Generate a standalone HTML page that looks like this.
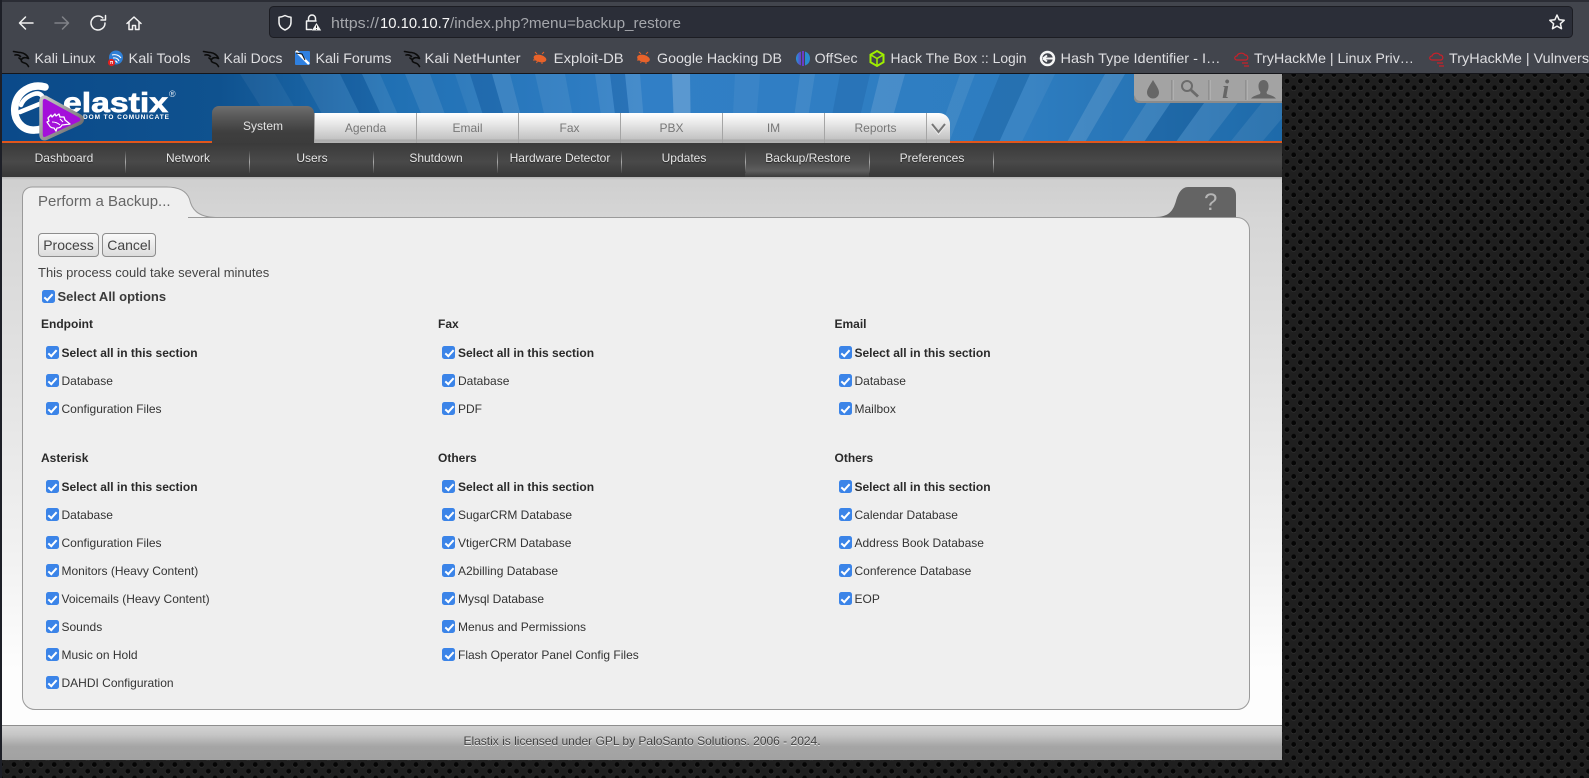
<!DOCTYPE html>
<html><head><meta charset="utf-8"><title>Elastix</title>
<style>
html,body{margin:0;padding:0;width:1589px;height:778px;overflow:hidden;background:#1c1c1c;font-family:"Liberation Sans",sans-serif}
#bg{position:absolute;left:0;top:0}
.a{position:absolute}
#strip{left:0;top:0;width:2px;height:778px;background:#1d1f27}
.m{position:absolute;top:143px;height:30px;line-height:30px;width:124px;text-align:center;font-size:12px;color:#e6e6e6;text-shadow:0 1px 1px #222}
.sep{position:absolute;top:151px;width:1px;height:22px;background:linear-gradient(#444,#aaa 50%,#444)}
.t{position:absolute;top:113px;height:30px;width:101px;border-left:1px solid #a5a5a5;background:linear-gradient(#fff,#e8e8e8 35%,#c2c2c2 88%,#aaa 89%,#b4b4b4);text-align:center;font-size:12px;line-height:30px;color:#777}
.r{position:absolute;height:16px;line-height:16px;font-size:12px;color:#333;white-space:nowrap;padding-left:16px}
.r:before{content:"";position:absolute;left:0;top:1px;width:13px;height:13px;border-radius:2.5px;background:#3b84e8}
.r:after{content:"";position:absolute;left:4.5px;top:2.5px;width:3px;height:7px;border:solid #fff;border-width:0 2px 2px 0;transform:rotate(42deg)}
.b{font-weight:bold;color:#2a2a2a}
.h{position:absolute;height:16px;line-height:16px;font-size:12px;font-weight:bold;color:#2a2a2a}
.btn{position:absolute;top:233px;height:22px;line-height:22px;border:1px solid #8d8d8d;border-radius:4px;background:linear-gradient(#fafafa,#dcdcdc);font-size:14px;color:#444;text-align:center}
</style></head><body>
<svg id="bg" width="1589" height="778">
<defs>
<pattern id="p" width="13.4" height="13.4" patternUnits="userSpaceOnUse" x="1283.65" y="77.95">
<rect width="13.4" height="13.4" fill="#1f1f1f"/>
<circle cx="3.35" cy="3.5" r="2.7" fill="#3c3c3c"/><circle cx="3.35" cy="3.2" r="2.5" fill="#050505"/>
<circle cx="10.05" cy="10.2" r="2.7" fill="#3c3c3c"/><circle cx="10.05" cy="9.9" r="2.5" fill="#050505"/>
</pattern>
<linearGradient id="hb" x1="0" x2="1" y1="0" y2="0">
<stop offset="0" stop-color="#0b4a8a"/><stop offset=".17" stop-color="#0f528f"/><stop offset=".3" stop-color="#2070b3"/><stop offset=".5" stop-color="#317fc6"/><stop offset=".8" stop-color="#2e7dc0"/><stop offset="1" stop-color="#1e6aa9"/>
</linearGradient>
<linearGradient id="of" x1="0" x2="1"><stop offset="0" stop-color="#1f9ad8"/><stop offset="1" stop-color="#6a3cc8"/></linearGradient>
<linearGradient id="bev" x1="0" x2="1" y1="0" y2="1"><stop offset="0" stop-color="#c8c8c8"/><stop offset=".6" stop-color="#8e8e8e"/><stop offset="1" stop-color="#555"/></linearGradient>
<clipPath id="hc"><rect x="2" y="74" width="1280" height="69"/></clipPath>
</defs>
<rect width="1589" height="778" fill="url(#p)"/>
<rect x="2" y="74" width="1280" height="69" fill="url(#hb)"/>
<g clip-path="url(#hc)" fill="#fff">
<polygon points="240,74 275,74 700,800" opacity=".05"/>
<polygon points="300,74 340,74 700,800" opacity=".07"/>
<polygon points="362,74 380,74 700,800" opacity=".08"/>
<polygon points="405,74 430,74 700,800" opacity=".09"/>
<polygon points="455,74 470,74 700,800" opacity=".06"/>
<polygon points="492,74 510,74 700,800" opacity=".1"/>
<polygon points="535,74 565,74 700,800" opacity=".07"/>
<polygon points="595,74 610,74 700,800" opacity=".08"/>
<polygon points="625,74 640,74 700,800" opacity=".1"/>
<polygon points="672,74 690,74 700,800" opacity=".2"/>
<polygon points="735,74 760,74 700,800" opacity=".05"/>
<polygon points="800,74 815,74 700,800" opacity=".08"/>
<polygon points="880,74 905,74 700,800" opacity=".12"/>
<polygon points="960,74 975,74 700,800" opacity=".08"/>
<polygon points="1030,74 1055,74 700,800" opacity=".06"/>
<polygon points="1105,74 1125,74 700,800" opacity=".12"/>
<polygon points="1165,74 1190,74 700,800" opacity=".1"/>
<polygon points="1225,74 1260,74 700,800" opacity=".1"/>
<polygon points="1285,74 1320,74 700,800" opacity=".08"/>
</g>
<g clip-path="url(#hc)" fill="#0a3f78">
<polygon points="340,74 362,74 700,800" opacity=".18"/>
<polygon points="470,74 492,74 700,800" opacity=".18"/>
<polygon points="610,74 625,74 700,800" opacity=".18"/>
<polygon points="840,74 870,74 700,800" opacity=".15"/>
<polygon points="1000,74 1030,74 700,800" opacity=".2"/>
<polygon points="1190,74 1225,74 700,800" opacity=".2"/>
</g>
<!-- Browser chrome -->
<rect x="0" y="0" width="1589" height="74" fill="#42454d"/>
<rect x="0" y="0" width="1589" height="2" fill="#2b2d35"/>
<rect x="0" y="73" width="1589" height="1" fill="#15161b"/>
<rect x="269.5" y="6.5" width="1303" height="31" rx="4" fill="#2b2e38" stroke="#1c1d23"/>
<g fill="none" stroke="#f2f2f2" stroke-width="1.5" stroke-linecap="round" stroke-linejoin="round">
<path d="M33 23H19.5M25.500 17l-6 6 6 6"/>
<path d="M55 23H68.500M62.500 17l6 6-6 6" stroke="#808288"/>
<path d="M105 23a7 7 0 1 1-2.200-5.100M105.500 15.500v4.500H101"/>
<path d="M127 23.500l7-6.500 7 6.500M129 22v7.500h3.500v-4h3v4h3.500V22"/>
<path d="M285 15.500c2 1 4 1.600 6 1.800v5c0 4-3 6.500-6 7.700-3-1.200-6-3.700-6-7.700v-5c2-.2 4-.8 6-1.800z"/>
<path d="M308.500 21v-2.500a3.500 3.500 0 0 1 7 0v2.500M306.500 21h9.500M306.500 21v8.500h5"/>
<path d="M1557 15l2.100 4.700 5.100.6-3.800 3.400 1.100 5-4.500-2.600-4.500 2.600 1.100-5-3.800-3.400 5.100-.6z"/>
</g>
<path d="M316.500 23l4.700 7.500h-9.400z" fill="#f2f2f2"/><path d="M316.500 25.500v2.500M316.500 29v.8" stroke="#222" stroke-width="1"/>
<g font-family="'Liberation Sans',sans-serif" font-size="15">
<text x="331" y="28" fill="#a5a7ac" textLength="48" lengthAdjust="spacingAndGlyphs">https://</text>
<text x="380" y="28" fill="#f5f5f5" textLength="70" lengthAdjust="spacingAndGlyphs">10.10.10.7</text>
<text x="450" y="28" fill="#a5a7ac" textLength="231" lengthAdjust="spacingAndGlyphs">/index.php?menu=backup_restore</text>
</g>
<g font-family="'Liberation Sans',sans-serif" font-size="14" fill="#dfdfe2">
<text x="34.500" y="63" textLength="61" lengthAdjust="spacingAndGlyphs">Kali Linux</text>
<text x="128.500" y="63" textLength="62" lengthAdjust="spacingAndGlyphs">Kali Tools</text>
<text x="223.500" y="63" textLength="59" lengthAdjust="spacingAndGlyphs">Kali Docs</text>
<text x="315.500" y="63" textLength="76" lengthAdjust="spacingAndGlyphs">Kali Forums</text>
<text x="424.500" y="63" textLength="96" lengthAdjust="spacingAndGlyphs">Kali NetHunter</text>
<text x="553.700" y="63" textLength="70" lengthAdjust="spacingAndGlyphs">Exploit-DB</text>
<text x="657" y="63" textLength="125" lengthAdjust="spacingAndGlyphs">Google Hacking DB</text>
<text x="814.600" y="63" textLength="43" lengthAdjust="spacingAndGlyphs">OffSec</text>
<text x="890.500" y="63" textLength="136" lengthAdjust="spacingAndGlyphs">Hack The Box :: Login</text>
<text x="1060.500" y="63" textLength="160" lengthAdjust="spacingAndGlyphs">Hash Type Identifier - I…</text>
<text x="1254" y="63" textLength="160" lengthAdjust="spacingAndGlyphs">TryHackMe | Linux Priv…</text>
<text x="1449" y="63" textLength="140" lengthAdjust="spacingAndGlyphs">TryHackMe | Vulnvers</text>
</g>
<!-- bookmark icons -->
<g fill="none" stroke="#0b0b0b" stroke-width="1.600" stroke-linecap="round" stroke-linejoin="round">
<path d="M13.500 51.500c3 .5 5 1 7 1 4 .5 7 3 8 6-3-1.500-6-1-7 1-1 2 1 3 3 3.500 2 .5 3 1.500 4 3.500M15 55c2-.5 4 0 5.500 1.500M19 58l2 1.500"/>
<path d="M203.500 51.500c3 .5 5 1 7 1 4 .5 7 3 8 6-3-1.500-6-1-7 1-1 2 1 3 3 3.500 2 .5 3 1.500 4 3.500M205 55c2-.5 4 0 5.500 1.500M209 58l2 1.500"/>
<path d="M404.500 51.500c3 .5 5 1 7 1 4 .5 7 3 8 6-3-1.500-6-1-7 1-1 2 1 3 3 3.500 2 .5 3 1.500 4 3.500M406 55c2-.5 4 0 5.500 1.500M410 58l2 1.500"/>
</g>
<circle cx="116" cy="57.500" r="7" fill="#2f7fd6"/><circle cx="111.500" cy="62.500" r="3.600" fill="#e02020"/>
<path d="M112 55c3-1 7 0 9 3M113 58c3-.5 5 .5 6 3M115 61c1 0 2 .5 2 2" stroke="#fff" fill="none"/>
<path d="M110 61.500h3M110.800 61.500v2.500M112.400 61.500v2.500" stroke="#fff" stroke-width=".7"/>
<rect x="295" y="51" width="15" height="14" rx="1" fill="#2f80e0"/><path d="M296 51l13 13" stroke="#fff" stroke-width="2.500"/><path d="M296 53l6 1 3 6" stroke="#111" fill="none"/>
<g fill="#e8622a"><ellipse cx="540" cy="58.500" rx="6.500" ry="3.600" transform="rotate(15 540 58.500)"/><ellipse cx="643.500" cy="58.500" rx="6.500" ry="3.600" transform="rotate(15 643.500 58.500)"/></g>
<g stroke="#e8622a" stroke-width="1"><path d="M533 60h3M537 54l-2-2M542 54l2-2M536.500 63l1-2M542 64l0-2M637 60h3M641 54l-2-2M646 54l2-2M640.500 63l1-2M646 64l0-2"/></g>
<path d="M801 51.500c-3 1-5 3.500-5 7s2 6 5 7z" fill="url(#of)"/><path d="M805 51.500c3 1 5 3.500 5 7s-2 6-5 7z" fill="#2a8ad0"/><rect x="802" y="51" width="2" height="15" fill="#6a3cc8"/>
<path d="M877 51l6.500 3.700v7.500L877 66l-6.500-3.800v-7.500z" fill="none" stroke="#9fef00" stroke-width="2"/><path d="M870.500 54.700l6.500 3.800 6.500-3.800M877 58.500V66" fill="none" stroke="#9fef00" stroke-width="1.500"/>
<circle cx="1047.500" cy="58.500" r="6.500" fill="none" stroke="#f5f5f5" stroke-width="2.400"/><path d="M1043 58.500h10M1043 58.500l4-3M1043 58.500l4 3" stroke="#f5f5f5" stroke-width="2" fill="none"/>
<g fill="none" stroke="#c8202a" stroke-width="1.200"><path d="M1237 60c-3 0-3-4 0-4 1-3 6-4 8-1 3 0 4 4 1 5zM1242 63h6M1244 66h5"/><path d="M1432 60c-3 0-3-4 0-4 1-3 6-4 8-1 3 0 4 4 1 5zM1437 63h6M1439 66h5"/></g>
<!-- Logo -->
<g fill="none" stroke="#fff" stroke-linecap="round">
<path d="M45 87c-14-4-28 5-30 19-2 14 7 25 20 24 5 0 9-2 12-5" stroke-width="7.500"/>
<path d="M20 112l22-9c3-7-2-11-8-9-6 2-11 6-13 11" stroke-width="4.500"/>
</g>
<text x="63" y="112" font-family="'Liberation Sans',sans-serif" font-weight="bold" font-size="28" fill="#fff" stroke="#fff" stroke-width=".7" textLength="105" lengthAdjust="spacingAndGlyphs">elastix</text>
<text x="169" y="97" font-size="9" fill="#dfe8f2" font-family="'Liberation Sans',sans-serif">®</text>
<text x="83" y="119" font-family="'Liberation Sans',sans-serif" font-weight="bold" font-size="6.500" fill="#fff" textLength="86" lengthAdjust="spacing">DOM TO COMUNICATE</text>
<path d="M41 101c0-3 3-5 6-3l33 18c3 2 3 5 0 7l-33 15c-4 2-6 0-6-4z" fill="#a40fda" stroke="url(#bev)" stroke-width="3.500" stroke-linejoin="round"/>
<path d="M48 118l3-3 1 2 3-3 1 2 3-2 1 3 4 0 1 3 5 4-8 1c-1 2-3 3-5 3l-1 3-2-3c-2 0-4-1-5-3l-2-3 2-1z" fill="none" stroke="#fff" stroke-width="1.300" stroke-linejoin="round"/>
<path d="M52 122c3 0 6 1 8 3M60 119l3 3" fill="none" stroke="#fff" stroke-width="1"/>
<!-- top right icons -->
<path d="M1134 74h148v29h-142c-4 0-6-2-6-6z" fill="#a3a3a3"/>
<path d="M1134 97c0 4 2 6 6 6h142v-2h-141c-4 0-6-2-6-6z" fill="#8b8b8b"/>
<g stroke="#7d7d7d"><path d="M1172 80v20M1209 80v20M1246 80v20"/></g>
<g stroke="#bdbdbd"><path d="M1173 80v20M1210 80v20M1247 80v20"/></g>
<path d="M1153 80c3 5 6 9 6 12.500a6 6 0 0 1-12 0c0-3.500 3-7.500 6-12.500z" fill="#666"/>
<circle cx="1187" cy="86" r="5" fill="none" stroke="#6b6b6b" stroke-width="2"/><path d="M1191 90l7 6.500" stroke="#6b6b6b" stroke-width="2.800"/>
<text x="1222" y="98" font-family="'Liberation Serif',serif" font-style="italic" font-weight="bold" font-size="26" fill="#666">i</text>
<path d="M1263.500 80c3 0 5 2.500 5 6 0 3-1 5-2 6l.5 2c3 1 7 2 9 4.500h-25c2-2.500 6-3.500 9-4.500l.5-2c-1-1-2-3-2-6 0-3.500 2-6 5-6z" fill="#666"/>
</svg>

<!-- orange line -->
<div class="a" style="left:2px;top:141px;width:1280px;height:2px;background:#e0561c"></div>
<!-- tabs -->
<div class="a" style="left:212px;top:106px;width:102px;height:37px;border-radius:7px 7px 0 0;background:linear-gradient(#6e6e6e,#585858 30%,#3f3f3f 70%,#3c3c3c);text-align:center;font-size:12px;line-height:41px;color:#e2e2e2">System</div>
<div class="t" style="left:314px">Agenda</div>
<div class="t" style="left:416px">Email</div>
<div class="t" style="left:518px">Fax</div>
<div class="t" style="left:620px">PBX</div>
<div class="t" style="left:722px">IM</div>
<div class="t" style="left:824px">Reports</div>
<div class="t" style="left:926px;width:23px;border-radius:0 11px 0 0">
<svg width="23" height="30" style="position:absolute;left:0;top:0"><path d="M5 11l6.500 8 6.500-8" fill="none" stroke="#eee" stroke-width="2" transform="translate(0 1.500)"/><path d="M5 11l6.500 8 6.500-8" fill="none" stroke="#777" stroke-width="2"/></svg></div>
<!-- menu bar -->
<div class="a" style="left:2px;top:143px;width:1280px;height:34px;background:linear-gradient(#3a3a3a,#494949 55%,#3c3c3c 88%,#383838)"></div>
<div class="a" style="left:745px;top:143px;width:124px;height:34px;background:linear-gradient(#3a3a3a,#505050 60%,#5e5e5e 82%,#3c3c3c)"></div>
<div class="m" style="left:2px">Dashboard</div>
<div class="m" style="left:126px">Network</div>
<div class="m" style="left:250px">Users</div>
<div class="m" style="left:374px">Shutdown</div>
<div class="m" style="left:498px">Hardware Detector</div>
<div class="m" style="left:622px">Updates</div>
<div class="m" style="left:746px">Backup/Restore</div>
<div class="m" style="left:870px">Preferences</div>
<div class="sep" style="left:125px"></div><div class="sep" style="left:249px"></div><div class="sep" style="left:373px"></div><div class="sep" style="left:497px"></div><div class="sep" style="left:621px"></div><div class="sep" style="left:745px"></div><div class="sep" style="left:869px"></div><div class="sep" style="left:993px"></div>
<!-- content -->
<div class="a" style="left:2px;top:177px;width:1280px;height:548px;background:linear-gradient(#cfcfcf,#d6d6d6 8%,#f2f2f2 70%,#fdfdfd 90%,#fdfdfd)"></div>
<div class="a" style="left:2px;top:177px;width:1280px;height:3px;background:linear-gradient(#b5b5b5,#d0d0d0)"></div>
<svg class="a" style="left:0;top:180px" width="1289" height="60">
<path d="M22.500 37.500V17c0-6 4-10 10-10h134c12 0 20 4 23 12 2 10 8 18 26 18.500" fill="#efefef" stroke="#9a9a9a"/>
<path d="M1155 37c14 0 18-6 21-16 2-8 6-14 12-14h40c5 0 8 3 8 8v22z" fill="#646464"/>
<text x="1204" y="30" font-size="24" fill="#b5b5b5" font-family="'Liberation Sans',sans-serif">?</text>
</svg>
<div class="a" style="left:22px;top:217px;width:1226px;height:491px;background:#efefef;border:1px solid #9a9a9a;border-radius:0 13px 13px 13px"></div>
<div class="a" style="left:23px;top:205px;width:165px;height:14px;background:#efefef"></div>
<div class="a" style="left:38px;top:193px;font-size:15px;line-height:18px;color:#666;white-space:nowrap">Perform a Backup...</div>
<div class="btn" style="left:38px;width:59px">Process</div>
<div class="btn" style="left:102px;width:52px">Cancel</div>
<div class="a" style="left:38px;top:265px;font-size:13px;line-height:16px;color:#444;white-space:nowrap">This process could take several minutes</div>
<div class="r b" style="left:41.5px;top:289px;font-size:13px;color:#3a3a3a">Select All options</div>

<div class="h" style="left:41px;top:316px">Endpoint</div>
<div class="r b" style="left:45.5px;top:345px">Select all in this section</div>
<div class="r" style="left:45.5px;top:373px">Database</div>
<div class="r" style="left:45.5px;top:401px">Configuration Files</div>
<div class="h" style="left:41px;top:450px">Asterisk</div>
<div class="r b" style="left:45.5px;top:479px">Select all in this section</div>
<div class="r" style="left:45.5px;top:507px">Database</div>
<div class="r" style="left:45.5px;top:535px">Configuration Files</div>
<div class="r" style="left:45.5px;top:563px">Monitors (Heavy Content)</div>
<div class="r" style="left:45.5px;top:591px">Voicemails (Heavy Content)</div>
<div class="r" style="left:45.5px;top:619px">Sounds</div>
<div class="r" style="left:45.5px;top:647px">Music on Hold</div>
<div class="r" style="left:45.5px;top:675px">DAHDI Configuration</div>

<div class="h" style="left:438px;top:316px">Fax</div>
<div class="r b" style="left:442px;top:345px">Select all in this section</div>
<div class="r" style="left:442px;top:373px">Database</div>
<div class="r" style="left:442px;top:401px">PDF</div>
<div class="h" style="left:438px;top:450px">Others</div>
<div class="r b" style="left:442px;top:479px">Select all in this section</div>
<div class="r" style="left:442px;top:507px">SugarCRM Database</div>
<div class="r" style="left:442px;top:535px">VtigerCRM Database</div>
<div class="r" style="left:442px;top:563px">A2billing Database</div>
<div class="r" style="left:442px;top:591px">Mysql Database</div>
<div class="r" style="left:442px;top:619px">Menus and Permissions</div>
<div class="r" style="left:442px;top:647px">Flash Operator Panel Config Files</div>

<div class="h" style="left:834.500px;top:316px">Email</div>
<div class="r b" style="left:838.500px;top:345px">Select all in this section</div>
<div class="r" style="left:838.500px;top:373px">Database</div>
<div class="r" style="left:838.500px;top:401px">Mailbox</div>
<div class="h" style="left:834.500px;top:450px">Others</div>
<div class="r b" style="left:838.500px;top:479px">Select all in this section</div>
<div class="r" style="left:838.500px;top:507px">Calendar Database</div>
<div class="r" style="left:838.500px;top:535px">Address Book Database</div>
<div class="r" style="left:838.500px;top:563px">Conference Database</div>
<div class="r" style="left:838.500px;top:591px">EOP</div>

<!-- footer -->
<div class="a" style="left:2px;top:725px;width:1280px;height:1px;background:#8e8e8e"></div>
<div class="a" style="left:2px;top:726px;width:1280px;height:34px;background:linear-gradient(#d2d2d2,#c6c6c6 25%,#a5a5a5 60%,#a2a2a2);text-align:center;font-size:12px;line-height:31px;color:#444;text-shadow:0 1px 0 #eee">Elastix is licensed under GPL by PaloSanto Solutions. 2006 - 2024.</div>
<div class="a" id="strip"></div>
</body></html>
